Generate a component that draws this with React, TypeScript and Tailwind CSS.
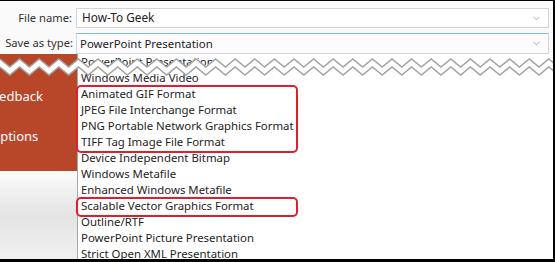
import { ChevronDown } from 'lucide-react';

const formats = [
  "PowerPoint Presentation",
  "Windows Media Video",
  "Animated GIF Format",
  "JPEG File Interchange Format",
  "PNG Portable Network Graphics Format",
  "TIFF Tag Image File Format",
  "Device Independent Bitmap",
  "Windows Metafile",
  "Enhanced Windows Metafile",
  "Scalable Vector Graphics Format",
  "Outline/RTF",
  "PowerPoint Picture Presentation",
  "Strict Open XML Presentation",
];

// zigzag torn edge between the two screenshots
function TornEdge() {
  const period = 19.6;
  const count = 30;
  let top = "";
  let bottom = "";
  for (let i = 0; i <= count; i++) {
    const x = i * period;
    top += `${i === 0 ? "M" : "L"}${x} 2 L${x + period / 2} 10 `;
    bottom += `${i === 0 ? "M" : "L"}${x} 10 L${x + period / 2} 18 `;
  }
  let fill = top;
  for (let i = count; i >= 0; i--) {
    const x = i * period;
    fill += `L${x + period / 2} 18 L${x} 10 `;
  }
  return (
    <svg className="absolute left-0 top-[56px]" width="555" height="21" viewBox="0 0 555 21">
      <path d={fill + "Z"} fill="#ffffff" />
      <path d={top} fill="none" stroke="#a3a3a3" strokeWidth="1.6" />
      <path d={bottom} fill="none" stroke="#a3a3a3" strokeWidth="1.6" />
    </svg>
  );
}

export default function App() {
  return (
    <div
      className="relative w-[555px] h-[262px] overflow-hidden bg-white border-t border-r-2 border-b-[3px] border-black"
      style={{ fontFamily: '"Noto Sans", "Open Sans", sans-serif' }}
    >
      {/* Save dialog fields */}
      <div className="h-[53px] bg-[#fafafa] flex flex-col gap-[5px] pt-[7px] pr-[4px]">
        <div className="flex items-center h-[21px]">
          <span className="w-[76px] pr-[4px] text-right text-[11.2px] text-[#333]">File name:</span>
          <div className="flex-1 h-full flex items-center justify-between bg-white border border-[#d4d4d4] pl-[5px] pr-[6px]">
            <span className="text-[11.8px] text-[#222]">How-To Geek</span>
            <ChevronDown className="w-[11px] h-[11px] text-[#8a8a8a]" strokeWidth={1.5} />
          </div>
        </div>
        <div className="flex items-center h-[22px]">
          <span className="w-[76px] text-right pr-[3px] text-[11.2px] text-[#333] whitespace-nowrap">Save as type:</span>
          <div className="flex-1 h-full flex items-center justify-between bg-[#fdfbfd] border border-[#d4d4d4] border-t-[#86b8e6] pl-[3px] pr-[6px]">
            <span className="text-[11.4px] text-[#222]">PowerPoint Presentation</span>
            <ChevronDown className="w-[11px] h-[11px] text-[#8a8a8a]" strokeWidth={1.5} />
          </div>
        </div>
      </div>

      {/* PowerPoint backstage with open dropdown */}
      <div className="flex h-[208px]">
        <div className="w-[77px] flex flex-col">
          <div className="h-[117px] bg-[#b8472a] text-white text-[13px] flex flex-col pt-[33px] gap-[20px] overflow-hidden">
            <span className="-ml-[15px]">Feedback</span>
            <span className="-ml-[10px]">Options</span>
          </div>
          <div className="flex-1 bg-gradient-to-b from-[#fbfbfb] via-[#e4e4e4] to-[#f2f2f2]" />
        </div>
        <div className="flex-1 bg-white border-l border-[#a8a8a8] pl-[3px] flex flex-col">
          {formats.map((f) => (
            <div key={f} className="h-4 flex items-center text-[11.4px] text-[#1e1e1e] whitespace-nowrap">
              {f}
            </div>
          ))}
        </div>
      </div>

      <TornEdge />

      {/* highlight boxes */}
      <div className="absolute left-[76px] top-[84px] w-[222px] h-[68px] border-2 border-[#de1f2e] rounded-[5px]" />
      <div className="absolute left-[76px] top-[196px] w-[222px] h-[20px] border-2 border-[#de1f2e] rounded-[5px]" />
    </div>
  );
}
